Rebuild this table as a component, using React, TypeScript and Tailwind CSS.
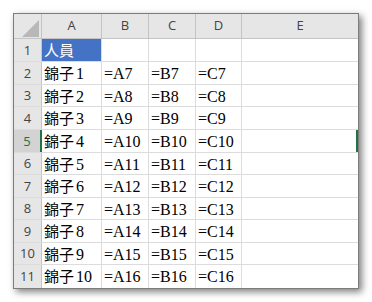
const cols = ['A', 'B', 'C', 'D', 'E'];
const colWidths = ['w-[60px]', 'w-[47px]', 'w-[47px]', 'w-[46px]', 'w-[116px]'];
const rowHeights = ['h-[23px]', 'h-[23px]', 'h-[22px]', 'h-[23px]', 'h-[23px]', 'h-[22px]', 'h-[23px]', 'h-[22px]', 'h-[23px]', 'h-[22px]', 'h-[23px]'];

// [cjk part, latin part]
const rows: [string, string][][] = [[['人員', ''], ['', ''], ['', ''], ['', ''], ['', '']]];
for (let i = 1; i <= 10; i++) {
  rows.push([['錦子', `${i}`], ['', `=A${i + 6}`], ['', `=B${i + 6}`], ['', `=C${i + 6}`], ['', '']]);
}

const headFont = { fontFamily: '"Open Sans", "Noto Sans", sans-serif' };
const cellFont = { fontFamily: '"Liberation Serif", "Noto Sans CJK TC", serif' };

export default function App() {
  return (
    <div className="w-[372px] h-[302px] bg-white pl-[13px] pt-[13px]">
      <div className="w-[346px] border border-[#7c7c7c] bg-white shadow-[3px_3px_7px_rgba(0,0,0,0.5)]">
        {/* column headers */}
        <div className="flex h-[25px] bg-[#e6e6e6] border-b border-[#c4c4c4]" style={headFont}>
          <div className="w-[28px] border-r border-[#c4c4c4] flex items-end justify-end pr-[2px] pb-[1px]">
            <svg width="17" height="17" viewBox="0 0 17 17">
              <polygon points="17,0 17,17 0,17" fill="#b8b8b8" />
            </svg>
          </div>
          {cols.map((c, i) => (
            <div
              key={c}
              className={`${colWidths[i]} ${i < 4 ? 'border-r border-[#c4c4c4]' : ''} flex items-center justify-center text-[13px] text-[#444444]`}
            >
              {c}
            </div>
          ))}
        </div>

        {/* rows */}
        {rows.map((row, r) => {
          const active = r === 4;
          return (
            <div key={r} className={`flex ${rowHeights[r]} border-b border-[#dcdcdc] last:border-b-0`}>
              <div
                className={`w-[28px] flex items-center justify-center pt-[1px] text-[13px] ${
                  active
                    ? 'bg-[#d3d3d3] text-[#217346] border-r-2 border-[#217346]'
                    : 'bg-[#e6e6e6] text-[#444444] border-r border-[#c4c4c4]'
                }`}
                style={headFont}
              >
                {r + 1}
              </div>
              {row.map(([cjk, latin], c) => {
                const sel = r === 0 && c === 0;
                return (
                  <div
                    key={c}
                    className={`${colWidths[c]} ${c < 4 ? 'border-r border-[#dcdcdc]' : ''} ${
                      active && c === 4 ? 'border-r-2 border-r-[#217346]' : ''
                    } ${sel ? 'bg-[#4472c4] text-white' : 'text-black'} pl-[2px] pt-[2px] text-[16px] leading-[20px] whitespace-nowrap overflow-hidden`}
                    style={cellFont}
                  >
                    {cjk && (
                      <span className={`text-[15px] ${latin ? 'mr-[2px]' : ''}`}>{cjk}</span>
                    )}
                    {latin}
                  </div>
                );
              })}
            </div>
          );
        })}
      </div>
    </div>
  );
}
